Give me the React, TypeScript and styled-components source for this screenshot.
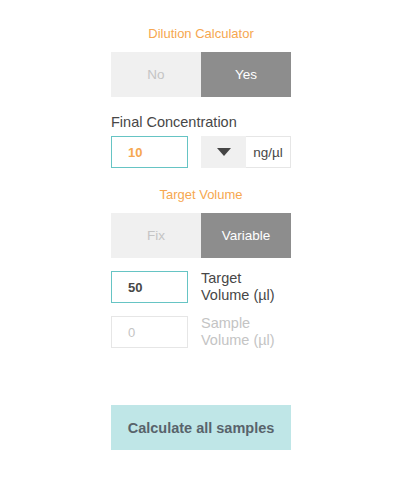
import React, { useState } from 'react'
import styled, { createGlobalStyle } from 'styled-components'

const PALETTE = {
	ORANGE: '#f6a750',
	TEAL: '#66c4c4',
	TEAL_LIGHT: '#bfe6e7',
	DARK_GRAY: '#8d8d8d',
	LIGHT_GRAY: '#f0f0f0',
	TEXT: '#474747',
	TEXT_MUTED: '#c4c4c4',
	BORDER: '#e6e6e6',
	BUTTON_TEXT: '#58636b',
}

const GlobalStyle = createGlobalStyle`
	body {
		margin: 0;
		background: #ffffff;
		font-family: 'Liberation Sans', Arial, sans-serif;
	}
`

type ToggleProps = {
	options: [string, string]
	value: number
	onChange: (v: number) => void
}

const Toggle = ({ options, value, onChange }: ToggleProps) => {
	return (
		<ToggleWrap>
			{options.map((opt, i) => (
				<ToggleBtn key={opt} $active={value === i} onClick={() => onChange(i)}>
					{opt}
				</ToggleBtn>
			))}
		</ToggleWrap>
	)
}

export default function App() {
	const [dilution, setDilution] = useState(1)
	const [volumeMode, setVolumeMode] = useState(1)

	return (
		<>
			<GlobalStyle />
			<Panel>
				<SectionTitle>Dilution Calculator</SectionTitle>
				<Toggle options={['No', 'Yes']} value={dilution} onChange={setDilution} />

				<FieldLabel>Final Concentration</FieldLabel>
				<Row>
					<NumberBox $tone="accent">10</NumberBox>
					<UnitSelect>
						<Caret>
							<svg width="14" height="8" viewBox="0 0 14 8">
								<path d="M0 0 H14 L7 8 Z" fill="#454545" />
							</svg>
						</Caret>
						<Unit>ng/µl</Unit>
					</UnitSelect>
				</Row>

				<SectionTitle $spaced>Target Volume</SectionTitle>
				<Toggle options={['Fix', 'Variable']} value={volumeMode} onChange={setVolumeMode} />

				<VolumeList>
					<Row>
						<NumberBox $tone="active">50</NumberBox>
						<SideLabel>
							Target
							<br />
							Volume (µl)
						</SideLabel>
					</Row>
					<Row>
						<NumberBox $tone="disabled">0</NumberBox>
						<SideLabel $muted>
							Sample
							<br />
							Volume (µl)
						</SideLabel>
					</Row>
				</VolumeList>

				<CalcButton>Calculate all samples</CalcButton>
			</Panel>
		</>
	)
}

const Panel = styled.div`
	width: 180px;
	margin-left: 111px;
	padding-top: 26px;
	display: flex;
	flex-direction: column;
`

const SectionTitle = styled.div<{ $spaced?: boolean }>`
	color: ${PALETTE.ORANGE};
	font-size: 13px;
	line-height: 16px;
	text-align: center;
	margin-top: ${(p) => (p.$spaced ? '19px' : '0')};
	margin-bottom: 10px;
`

const ToggleWrap = styled.div`
	display: grid;
	grid-template-columns: 1fr 1fr;
	height: 45px;
`

const ToggleBtn = styled.button<{ $active: boolean }>`
	border: none;
	margin: 0;
	padding: 0;
	font-family: inherit;
	font-size: 13.5px;
	cursor: pointer;
	background: ${(p) => (p.$active ? PALETTE.DARK_GRAY : PALETTE.LIGHT_GRAY)};
	color: ${(p) => (p.$active ? '#ffffff' : PALETTE.TEXT_MUTED)};
`

const FieldLabel = styled.div`
	color: ${PALETTE.TEXT};
	font-size: 14.5px;
	line-height: 18px;
	margin-top: 16px;
	margin-bottom: 5px;
`

const Row = styled.div`
	display: flex;
	align-items: center;
	gap: 13px;
	height: 32px;
`

const NumberBox = styled.div<{ $tone: 'accent' | 'active' | 'disabled' }>`
	box-sizing: border-box;
	width: 77px;
	height: 32px;
	flex-shrink: 0;
	display: flex;
	align-items: center;
	padding-left: 16px;
	font-size: 13px;
	font-weight: ${(p) => (p.$tone === 'disabled' ? 'normal' : 'bold')};
	border: ${(p) => (p.$tone === 'disabled' ? `1px solid ${PALETTE.BORDER}` : `1.5px solid ${PALETTE.TEAL}`)};
	color: ${(p) =>
		p.$tone === 'accent' ? PALETTE.ORANGE : p.$tone === 'active' ? PALETTE.TEXT : PALETTE.TEXT_MUTED};
`

const UnitSelect = styled.div`
	display: grid;
	grid-template-columns: 45px 1fr;
	width: 90px;
	height: 32px;
`

const Caret = styled.div`
	background: ${PALETTE.LIGHT_GRAY};
	display: flex;
	align-items: center;
	justify-content: center;
`

const Unit = styled.div`
	box-sizing: border-box;
	border: 1px solid ${PALETTE.BORDER};
	border-left: none;
	display: flex;
	align-items: center;
	justify-content: center;
	color: ${PALETTE.TEXT};
	font-size: 13.5px;
`

const VolumeList = styled.div`
	display: flex;
	flex-direction: column;
	gap: 13px;
	margin-top: 13px;
`

const SideLabel = styled.div<{ $muted?: boolean }>`
	font-size: 14.5px;
	line-height: 17px;
	color: ${(p) => (p.$muted ? PALETTE.TEXT_MUTED : PALETTE.TEXT)};
`

const CalcButton = styled.button`
	margin-top: 57px;
	height: 45px;
	border: none;
	background: ${PALETTE.TEAL_LIGHT};
	color: ${PALETTE.BUTTON_TEXT};
	font-family: inherit;
	font-size: 14.5px;
	font-weight: bold;
	cursor: pointer;
`
